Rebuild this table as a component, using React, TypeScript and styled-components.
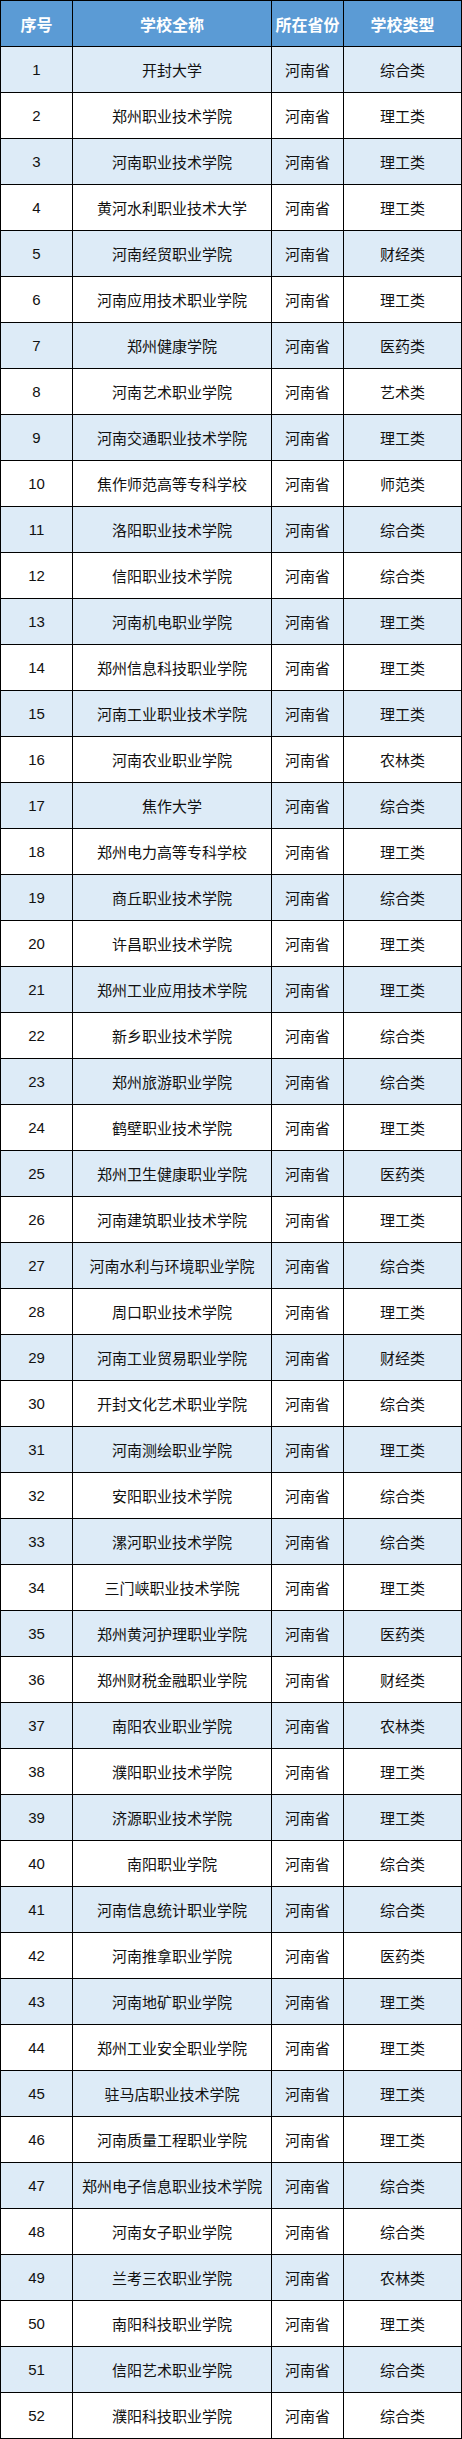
import React from "react";
import styled, { createGlobalStyle } from "styled-components";

const GlobalStyle = createGlobalStyle`
  html, body {
    margin: 0;
    padding: 0;
    background: #ffffff;
  }
  body {
    font-family: "Liberation Sans", "Noto Sans CJK SC", sans-serif;
  }
`;

type School = [string, string];

const schools: School[] = [
  ["开封大学", "综合类"],
  ["郑州职业技术学院", "理工类"],
  ["河南职业技术学院", "理工类"],
  ["黄河水利职业技术大学", "理工类"],
  ["河南经贸职业学院", "财经类"],
  ["河南应用技术职业学院", "理工类"],
  ["郑州健康学院", "医药类"],
  ["河南艺术职业学院", "艺术类"],
  ["河南交通职业技术学院", "理工类"],
  ["焦作师范高等专科学校", "师范类"],
  ["洛阳职业技术学院", "综合类"],
  ["信阳职业技术学院", "综合类"],
  ["河南机电职业学院", "理工类"],
  ["郑州信息科技职业学院", "理工类"],
  ["河南工业职业技术学院", "理工类"],
  ["河南农业职业学院", "农林类"],
  ["焦作大学", "综合类"],
  ["郑州电力高等专科学校", "理工类"],
  ["商丘职业技术学院", "综合类"],
  ["许昌职业技术学院", "理工类"],
  ["郑州工业应用技术学院", "理工类"],
  ["新乡职业技术学院", "综合类"],
  ["郑州旅游职业学院", "综合类"],
  ["鹤壁职业技术学院", "理工类"],
  ["郑州卫生健康职业学院", "医药类"],
  ["河南建筑职业技术学院", "理工类"],
  ["河南水利与环境职业学院", "综合类"],
  ["周口职业技术学院", "理工类"],
  ["河南工业贸易职业学院", "财经类"],
  ["开封文化艺术职业学院", "综合类"],
  ["河南测绘职业学院", "理工类"],
  ["安阳职业技术学院", "综合类"],
  ["漯河职业技术学院", "综合类"],
  ["三门峡职业技术学院", "理工类"],
  ["郑州黄河护理职业学院", "医药类"],
  ["郑州财税金融职业学院", "财经类"],
  ["南阳农业职业学院", "农林类"],
  ["濮阳职业技术学院", "理工类"],
  ["济源职业技术学院", "理工类"],
  ["南阳职业学院", "综合类"],
  ["河南信息统计职业学院", "综合类"],
  ["河南推拿职业学院", "医药类"],
  ["河南地矿职业学院", "理工类"],
  ["郑州工业安全职业学院", "理工类"],
  ["驻马店职业技术学院", "理工类"],
  ["河南质量工程职业学院", "理工类"],
  ["郑州电子信息职业技术学院", "综合类"],
  ["河南女子职业学院", "综合类"],
  ["兰考三农职业学院", "农林类"],
  ["南阳科技职业学院", "理工类"],
  ["信阳艺术职业学院", "综合类"],
  ["濮阳科技职业学院", "综合类"],
];

const Table = styled.div`
  display: grid;
  grid-template-columns: 72px 199px 72px 118px;
  grid-auto-rows: 46px;
  width: 462px;
  box-sizing: border-box;
  border-top: 1px solid #000;
  border-left: 1px solid #000;
`;

const Cell = styled.div<{ $striped?: boolean }>`
  box-sizing: border-box;
  display: flex;
  align-items: center;
  justify-content: center;
  border-right: 1px solid #000;
  border-bottom: 1px solid #000;
  background: ${(p) => (p.$striped ? "#ddebf7" : "#ffffff")};
  color: #111;
  font-size: 15px;
  white-space: nowrap;
  overflow: hidden;
`;

const HeadCell = styled(Cell)`
  background: #5b9bd5;
  color: #ffffff;
  font-size: 16px;
  font-weight: 700;
`;

export default function App() {
  return (
    <>
      <GlobalStyle />
      <Table>
        <HeadCell>序号</HeadCell>
        <HeadCell>学校全称</HeadCell>
        <HeadCell>所在省份</HeadCell>
        <HeadCell>学校类型</HeadCell>
        {schools.map(([name, kind], i) => {
          const striped = i % 2 === 0;
          return (
            <React.Fragment key={i}>
              <Cell $striped={striped}>{i + 1}</Cell>
              <Cell $striped={striped}>{name}</Cell>
              <Cell $striped={striped}>河南省</Cell>
              <Cell $striped={striped}>{kind}</Cell>
            </React.Fragment>
          );
        })}
      </Table>
    </>
  );
}
